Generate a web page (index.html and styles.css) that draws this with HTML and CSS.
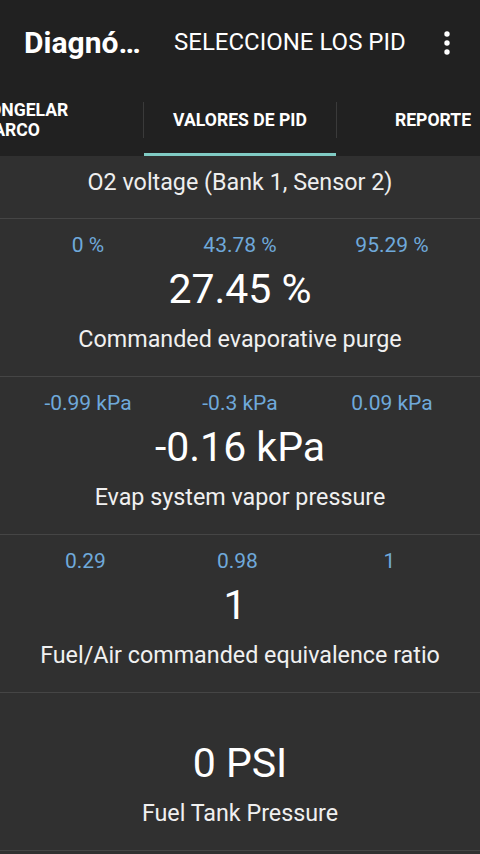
FILE: index.html
```html
<!DOCTYPE html>
<html lang="es">
<head>
<meta charset="utf-8">
<link rel="stylesheet" href="styles.css">
</head>
<body>
<div class="app">
  <header class="toolbar">
    <div class="title">Diagnó…</div>
    <div class="action">SELECCIONE LOS PID</div>
    <div class="overflow">
      <svg width="10" height="28" viewBox="0 0 10 28"><circle cx="5" cy="5" r="2.7" fill="#fff"/><circle cx="5" cy="14" r="2.7" fill="#fff"/><circle cx="5" cy="23" r="2.7" fill="#fff"/></svg>
    </div>
  </header>
  <div class="tabbar">
    <nav class="tabs">
      <div class="tab first"><span>CONGELAR<br>MARCO</span></div>
      <div class="sep"></div>
      <div class="tab active"><span>VALORES DE PID</span></div>
      <div class="sep"></div>
      <div class="tab"><span>REPORTE</span></div>
    </nav>
  </div>
  <main class="list">
    <div class="head">O2 voltage (Bank 1, Sensor 2)</div>
    <div class="row">
      <div class="stats"><span>0 %</span><span>43.78 %</span><span>95.29 %</span></div>
      <div class="value">27.45 %</div>
      <div class="label">Commanded evaporative purge</div>
    </div>
    <div class="row">
      <div class="stats"><span>-0.99 kPa</span><span>-0.3 kPa</span><span>0.09 kPa</span></div>
      <div class="value">-0.16 kPa</div>
      <div class="label">Evap system vapor pressure</div>
    </div>
    <div class="row">
      <div class="stats"><span>0.29&nbsp;</span><span>0.98&nbsp;</span><span>1&nbsp;</span></div>
      <div class="value">1&nbsp;</div>
      <div class="label">Fuel/Air commanded equivalence ratio</div>
    </div>
    <div class="row">
      <div class="stats"><span></span><span></span><span></span></div>
      <div class="value">0 PSI</div>
      <div class="label">Fuel Tank Pressure</div>
    </div>
  </main>
</div>
</body>
</html>
```
FILE: styles.css
```css
html, body {
  margin: 0;
  padding: 0;
  background: #303030;
}
body {
  font-family: Roboto, "Liberation Sans", sans-serif;
  color: #fff;
  width: 480px;
  height: 854px;
  overflow: hidden;
}
.app {
  width: 480px;
  overflow: hidden;
}
.toolbar {
  height: 84px;
  background: #212121;
  display: flex;
  align-items: center;
  padding-left: 24px;
  box-sizing: border-box;
}
.title {
  font-size: 30px;
  font-weight: 700;
  width: 150px;
  white-space: nowrap;
}
.action {
  font-size: 24px;
  font-weight: 400;
}
.overflow {
  margin-left: auto;
  width: 66px;
  display: flex;
  justify-content: center;
  padding-top: 2px;
}
.tabbar {
  height: 72px;
  background: #212121;
  overflow: hidden;
}
.tabs {
  height: 72px;
  display: flex;
  align-items: stretch;
  margin-left: -97px;
  width: 700px;
}
.tab {
  width: 192px;
  flex: none;
  display: flex;
  align-items: center;
  justify-content: center;
  font-size: 17.6px;
  font-weight: 700;
  line-height: 20px;
  box-sizing: border-box;
}
.tab.first {
  width: 240px;
  text-align: left;
}
.tab.active {
  box-shadow: inset 0 -3px 0 #80cbc4;
}
.sep {
  width: 1px;
  flex: none;
  background: #3a3a3a;
  margin: 18px 0 18px;
}
.list {
  background: #303030;
}
.head {
  height: 63px;
  border-bottom: 1px solid #454545;
  text-align: center;
  font-size: 23.3px;
  line-height: 26px;
  padding-top: 13px;
  box-sizing: border-box;
  color: #eee;
}
.row {
  height: 158px;
  box-sizing: border-box;
  border-bottom: 1px solid #454545;
  padding: 14px 12px 0;
  text-align: center;
}
.stats {
  display: grid;
  grid-template-columns: 1fr 1fr 1fr;
  height: 24px;
  line-height: 24px;
  font-size: 21px;
  color: #6fa9da;
}
.value {
  height: 64px;
  line-height: 64px;
  font-size: 41px;
}
.label {
  margin-top: 2px;
  line-height: 32px;
  font-size: 23.3px;
  color: #f0f0f0;
}
```
